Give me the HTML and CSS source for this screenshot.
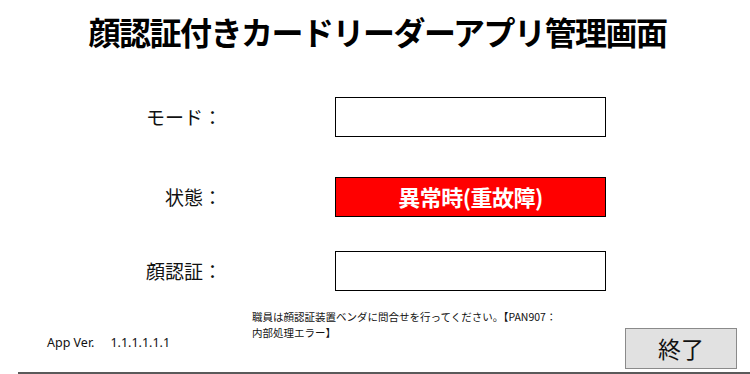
FILE: index.html
```html
<!DOCTYPE html>
<html lang="ja">
<head>
<meta charset="utf-8">
<title>顔認証付きカードリーダーアプリ管理画面</title>
<link rel="stylesheet" href="styles.css">
</head>
<body>
<div class="page">
  <h1 class="title">顔認証付きカードリーダーアプリ管理画面</h1>
  <div class="form">
    <div class="row row-mode">
      <div class="label">モード：</div>
      <div class="field"></div>
    </div>
    <div class="row row-state">
      <div class="label">状態：</div>
      <div class="field field-alert">異常時(重故障)</div>
    </div>
    <div class="row row-face">
      <div class="label">顔認証：</div>
      <div class="field"></div>
    </div>
  </div>
  <div class="bottom">
    <div class="version"><span>App Ver.</span><span>1.1.1.1.1.1</span></div>
    <div class="message">職員は顔認証装置ベンダに問合せを行ってください。【PAN907：<br>内部処理エラー】</div>
    <button class="exit">終了</button>
  </div>
  <div class="rule"></div>
</div>
</body>
</html>
```
FILE: styles.css
```css
html, body {
  margin: 0;
  padding: 0;
  background: #ffffff;
}
body {
  font-family: "Noto Sans CJK JP", "Noto Sans", sans-serif;
  color: #000000;
}
.page {
  width: 750px;
  height: 374px;
  overflow: hidden;
  display: flex;
  flex-direction: column;
}
.title {
  margin: 0;
  padding-top: 11px;
  padding-left: 5px;
  height: 40px;
  line-height: 40px;
  font-size: 32px;
  font-weight: 700;
  letter-spacing: -1.5px;
  text-align: center;
}
.form {
  display: flex;
  flex-direction: column;
  margin-top: 46px;
}
.row {
  display: flex;
  align-items: center;
  height: 40px;
}
.row-state {
  margin-top: 40px;
}
.row-face {
  margin-top: 34px;
}
.label {
  width: 222px;
  margin-right: 113px;
  text-align: right;
  font-size: 19px;
  line-height: 24px;
  color: #111111;
}
.field {
  box-sizing: border-box;
  width: 271px;
  height: 40px;
  border: 1.5px solid #000000;
  background: #ffffff;
}
.field-alert {
  background: #ff0000;
  color: #ffffff;
  font-size: 22px;
  font-weight: 700;
  line-height: 37px;
  text-align: center;
  letter-spacing: -0.5px;
}
.bottom {
  display: flex;
  align-items: flex-start;
  height: 63px;
  margin-top: 18px;
}
.version {
  margin-left: 47px;
  margin-top: 26px;
  width: 205px;
  display: flex;
  gap: 16px;
  font-family: "Noto Sans", sans-serif;
  font-size: 12.5px;
  line-height: 16px;
  color: #111111;
}
.message {
  font-size: 10.5px;
  line-height: 16px;
  color: #111111;
  white-space: nowrap;
}
.exit {
  margin-left: auto;
  margin-right: 13px;
  margin-top: 19px;
  box-sizing: border-box;
  width: 112px;
  height: 41px;
  padding: 0;
  border: 1px solid #8a8a8a;
  background: #e1e1e1;
  font-family: "Noto Sans CJK JP", sans-serif;
  font-size: 23px;
  line-height: 39px;
  color: #111111;
}
.rule {
  margin-left: 18px;
  height: 2px;
  background: #5a5a5a;
}
```
